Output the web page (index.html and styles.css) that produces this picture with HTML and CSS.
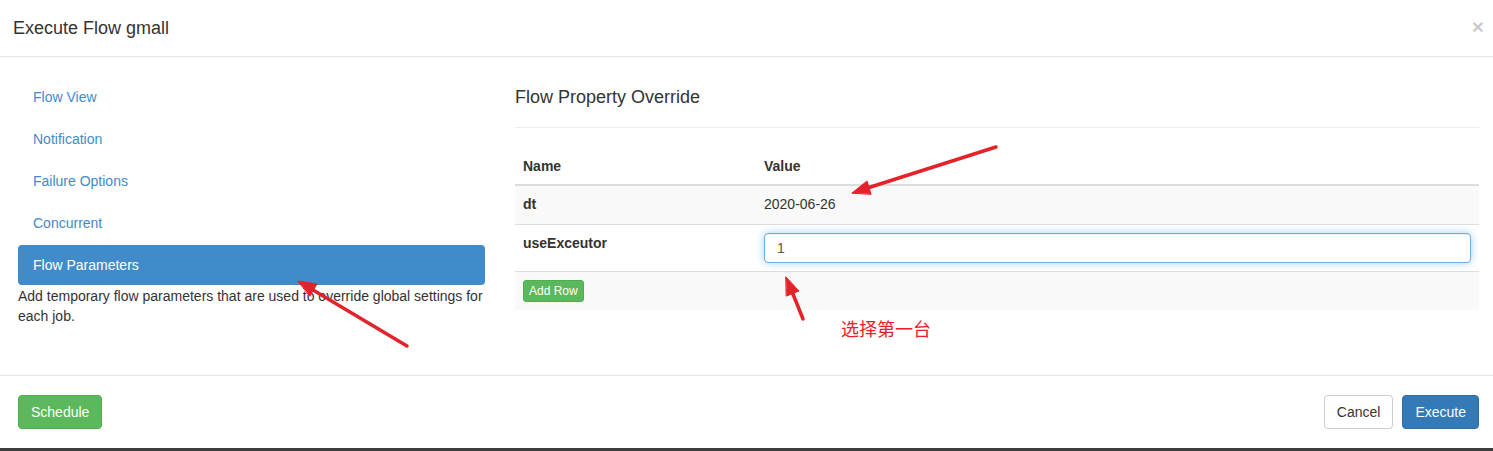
FILE: index.html
```html
<!DOCTYPE html>
<html lang="en">
<head>
<meta charset="utf-8">
<title>Execute Flow gmall</title>
<link rel="stylesheet" href="styles.css">
</head>
<body>
<div class="page">
  <div class="modal">
    <div class="modal-header">
      <h4 class="modal-title">Execute Flow gmall</h4>
      <button class="close" type="button">×</button>
    </div>
    <div class="modal-body">
      <div class="col-left">
        <ul class="nav-pills">
          <li><a>Flow View</a></li>
          <li><a>Notification</a></li>
          <li><a>Failure Options</a></li>
          <li><a>Concurrent</a></li>
          <li class="active"><a>Flow Parameters</a></li>
        </ul>
        <p class="help">Add temporary flow parameters that are used to override global settings for each job.</p>
      </div>
      <div class="col-right">
        <h4 class="section-title">Flow Property Override</h4>
        <table class="props">
          <thead>
            <tr><th class="col-name">Name</th><th>Value</th></tr>
          </thead>
          <tbody>
            <tr class="striped row-dt"><td class="key">dt</td><td>2020-06-26</td></tr>
            <tr><td class="key">useExceutor</td><td><input class="form-control" type="text" value="1"></td></tr>
            <tr class="striped"><td colspan="2"><button class="btn btn-xs btn-success" type="button">Add Row</button></td></tr>
          </tbody>
        </table>
      </div>
    </div>
    <div class="modal-footer">
      <button class="btn btn-success" type="button">Schedule</button>
      <div class="footer-right">
        <button class="btn btn-default" type="button">Cancel</button>
        <button class="btn btn-primary" type="button">Execute</button>
      </div>
    </div>
  </div>
  <svg class="annotations" width="1493" height="451" viewBox="0 0 1493 451">
    <g stroke="#e3222a" stroke-width="3.5" stroke-linecap="round" fill="#e3222a">
      <line x1="407" y1="346" x2="313" y2="290"/>
      <polygon points="298,281 317,284 310,296" stroke-width="1" stroke-linejoin="round"/>
      <line x1="996" y1="147" x2="869" y2="187.5"/>
      <polygon points="852,193 867,181 871,194" stroke-width="1" stroke-linejoin="round"/>
      <line x1="803" y1="319" x2="793" y2="294"/>
      <polygon points="786,277 799,291 786.5,296" stroke-width="1" stroke-linejoin="round"/>
    </g>
  </svg>
  <div class="annotation-label">选择第一台</div>
</div>
</body>
</html>
```
FILE: styles.css
```css
* { box-sizing: border-box; }

html, body {
  margin: 0;
  padding: 0;
  background: #3d3d3d;
}

body {
  font-family: "Liberation Sans", Arial, sans-serif;
  font-size: 14px;
  line-height: 20px;
  color: #333;
}

.page {
  position: relative;
  width: 1493px;
  height: 451px;
  overflow: hidden;
}

.modal {
  width: 1493px;
  height: 448px;
  background: #fff;
  display: flex;
  flex-direction: column;
}

.modal-header {
  display: flex;
  justify-content: space-between;
  align-items: flex-start;
  padding: 15px 9px 15px 13px;
  border-bottom: 1px solid #e5e5e5;
}

.modal-title {
  margin: 0;
  font-size: 18px;
  font-weight: normal;
  line-height: 26px;
  color: #333;
}

.close {
  margin-top: 1px;
  padding: 0;
  border: 0;
  background: none;
  font-family: "Liberation Sans", Arial, sans-serif;
  font-size: 21px;
  font-weight: bold;
  line-height: 1;
  color: #000;
  opacity: 0.2;
}

.modal-body {
  flex: 1;
  display: grid;
  grid-template-columns: 467px 1fr;
  column-gap: 30px;
  padding: 20px 14px 0 18px;
}

.nav-pills {
  list-style: none;
  margin: 0;
  padding: 0;
  display: flex;
  flex-direction: column;
  gap: 2px;
}

.nav-pills a {
  display: block;
  padding: 10px 15px;
  border-radius: 4px;
  color: #428bca;
  line-height: 20px;
}

.nav-pills .active a {
  background: #428bca;
  color: #fff;
}

.help {
  margin: 1px 0 0;
  line-height: 20px;
}

.section-title {
  margin: 0;
  font-size: 18px;
  font-weight: normal;
  line-height: 40px;
  padding-bottom: 10px;
  border-bottom: 1px solid #eee;
  color: #333;
}

.props {
  width: 100%;
  margin-top: 20px;
  border-collapse: collapse;
}

.props th {
  text-align: left;
  padding: 8px;
  line-height: 20px;
  font-weight: bold;
  border-bottom: 2px solid #ddd;
}

.props .col-name { width: 25%; }

.props td {
  padding: 8px;
  line-height: 20px;
  vertical-align: top;
  border-top: 1px solid #ddd;
}

.props .row-dt td { padding-bottom: 10px; }

.props .striped td { background: #f9f9f9; }

.props .key { font-weight: bold; }

.form-control {
  display: block;
  width: 100%;
  height: 30px;
  padding: 4px 12px;
  font-family: "Liberation Sans", Arial, sans-serif;
  font-size: 14px;
  color: #555;
  background: #fff;
  border: 1px solid #66afe9;
  border-radius: 4px;
  outline: 0;
  box-shadow: inset 0 1px 1px rgba(0,0,0,.075), 0 0 8px rgba(102,175,233,.6);
}

.btn {
  display: inline-block;
  padding: 6px 12px;
  font-family: "Liberation Sans", Arial, sans-serif;
  font-size: 14px;
  line-height: 20px;
  border: 1px solid transparent;
  border-radius: 4px;
  cursor: pointer;
}

.btn-xs {
  padding: 1px 5px;
  font-size: 12px;
  line-height: 18px;
  border-radius: 3px;
}

.btn-success {
  color: #fff;
  background: #5cb85c;
  border-color: #4cae4c;
}

.btn-primary {
  color: #fff;
  background: #337ab7;
  border-color: #2e6da4;
}

.btn-default {
  color: #333;
  background: #fff;
  border-color: #ccc;
}

.modal-footer {
  display: flex;
  justify-content: space-between;
  align-items: center;
  padding: 19px 14px 19px 18px;
  border-top: 1px solid #e5e5e5;
}

.footer-right {
  display: flex;
  gap: 9px;
}

.annotations {
  position: absolute;
  left: 0;
  top: 0;
  pointer-events: none;
}

.annotation-label {
  position: absolute;
  left: 841px;
  top: 317px;
  font-family: "Noto Sans CJK SC", "Microsoft YaHei", sans-serif;
  font-size: 18px;
  line-height: 22px;
  color: #e3222a;
  pointer-events: none;
}
```
